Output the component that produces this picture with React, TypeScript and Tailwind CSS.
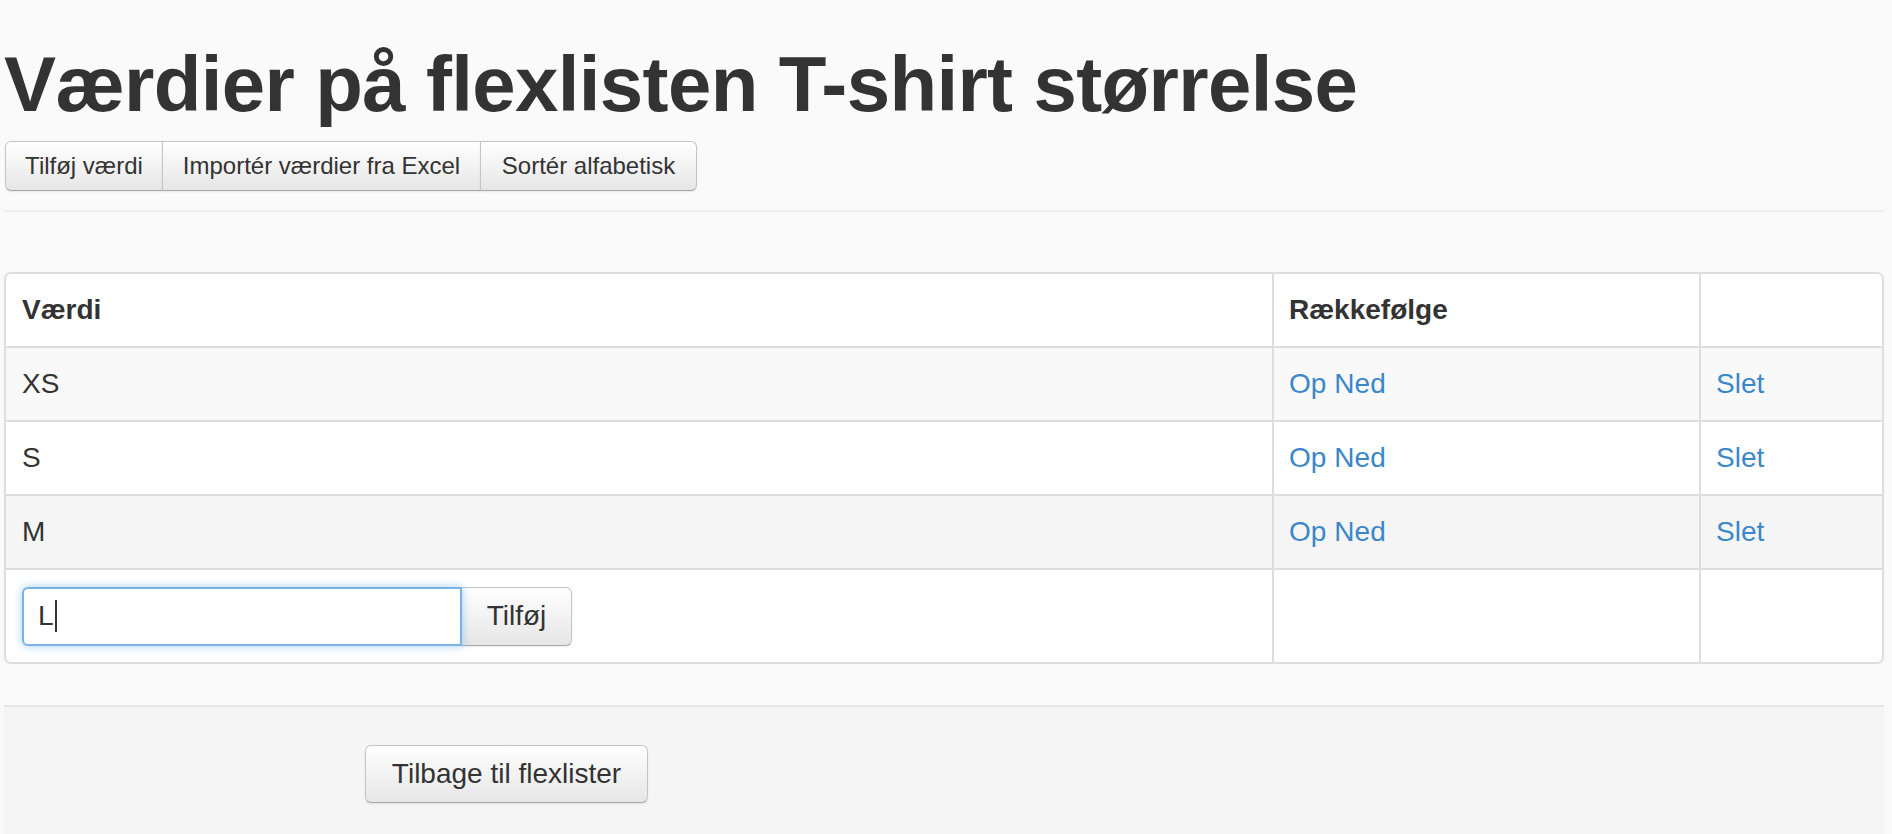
import React from "react";

const btnBase =
  "flex items-center justify-center bg-linear-to-b from-white to-[#e6e6e6] border border-[#c4c4c4] border-b-[#a8a8a8] text-[#333] shadow-[inset_0_1px_0_rgba(255,255,255,0.6),0_1px_2px_rgba(0,0,0,0.08)]";

function Row({
  value,
  bg,
}: {
  value: string;
  bg: string;
}) {
  return (
    <div className={`flex h-[74px] border-t-2 border-[#ddd] ${bg}`}>
      <div className="w-[1266px] flex items-center pl-[16px] text-[28px]">{value}</div>
      <div className="w-[427px] border-l-2 border-[#ddd] flex items-center pl-[15px] text-[28px] text-[#3a87c9]">
        <span>Op</span>
        <span className="ml-[8px]">Ned</span>
      </div>
      <div className="w-[183px] border-l-2 border-[#ddd] flex items-center pl-[15px] text-[28px] text-[#3a87c9]">
        Slet
      </div>
    </div>
  );
}

export default function App() {
  return (
    <div className="min-h-[834px] bg-[#fafafa] text-[#333] font-['Liberation_Sans',Arial,Helvetica,sans-serif]">
      <div className="ml-[4px] w-[1880px]">
        <h1 className="pt-[41px] text-[78px] leading-[86px] font-bold tracking-[-0.65px]">
          Værdier på flexlisten T-shirt størrelse
        </h1>
        <div className="mt-[14px] flex ml-px">
          <div className={`${btnBase} h-[50px] w-[158px] text-[24px] rounded-l-[6px]`}>Tilføj værdi</div>
          <div className={`${btnBase} h-[50px] w-[319px] -ml-px text-[24px]`}>Importér værdier fra Excel</div>
          <div className={`${btnBase} h-[50px] w-[217px] -ml-px text-[24px] rounded-r-[6px]`}>Sortér alfabetisk</div>
        </div>
        <div className="mt-[19px] h-[2px] bg-[#eeeeee]" />

        <div className="mt-[60px] border-2 border-[#ddd] rounded-[7px] bg-white overflow-hidden">
          <div className="flex h-[72px] bg-white font-bold text-[28px]">
            <div className="w-[1266px] flex items-center pl-[16px]">Værdi</div>
            <div className="w-[427px] border-l-2 border-[#ddd] flex items-center pl-[15px]">Rækkefølge</div>
            <div className="w-[183px] border-l-2 border-[#ddd]" />
          </div>
          <Row value="XS" bg="bg-[#f9f9f9]" />
          <Row value="S" bg="bg-white" />
          <Row value="M" bg="bg-[#f5f5f5]" />
          <div className="flex h-[94px] border-t-2 border-[#ddd] bg-white">
            <div className="w-[1266px] flex items-center pl-[16px]">
              <div className="flex h-[59px]">
                <div className="w-[440px] h-[59px] flex items-center pl-[14px] border-2 border-[#7ab1e6] rounded-l-[6px] bg-white text-[28px] shadow-[0_0_9px_rgba(82,168,236,0.55)] relative z-10">
                  <span>L</span>
                  <span className="ml-[1px] inline-block w-[2px] h-[32px] bg-[#333]" />
                </div>
                <div className={`${btnBase} w-[111px] h-[59px] -ml-px text-[28px] rounded-r-[6px]`}>Tilføj</div>
              </div>
            </div>
            <div className="w-[427px] border-l-2 border-[#ddd]" />
            <div className="w-[183px] border-l-2 border-[#ddd]" />
          </div>
        </div>

        <div className="mt-[41px] border-t-2 border-[#e5e5e5] bg-[#f5f5f5] h-[130px] pl-[361px] pt-[38px]">
          <div className={`${btnBase} w-[283px] h-[58px] text-[28px] rounded-[6px]`}>Tilbage til flexlister</div>
        </div>
      </div>
    </div>
  );
}
